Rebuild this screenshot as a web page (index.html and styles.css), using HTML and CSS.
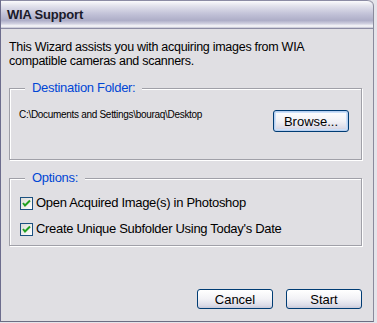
FILE: index.html
```html
<!DOCTYPE html>
<html lang="en">
<head>
  <meta charset="UTF-8">
  <title>WIA Support</title>
  <link rel="stylesheet" href="styles.css">
</head>
<body>

  <div class="window">
    <div class="titlebar">WIA Support</div>

    <div class="content">
      <p class="intro">This Wizard assists you with acquiring images from WIA<br>compatible cameras and scanners.</p>

      <fieldset class="group dest">
        <legend>Destination Folder:</legend>
        <div class="row">
          <span class="path">C:\Documents and Settings\bouraq\Desktop</span>
          <button class="btn default">Browse...</button>
        </div>
      </fieldset>

      <fieldset class="group options">
        <legend>Options:</legend>
        <label class="check">
          <span class="box">
            <svg width="11" height="11" viewBox="0 0 11 11"><path d="M2 5 L4 7.5 L9 2.5" fill="none" stroke="#21a121" stroke-width="2"/></svg>
          </span>
          Open Acquired Image(s) in Photoshop
        </label>
        <label class="check">
          <span class="box">
            <svg width="11" height="11" viewBox="0 0 11 11"><path d="M2 5 L4 7.5 L9 2.5" fill="none" stroke="#21a121" stroke-width="2"/></svg>
          </span>
          Create Unique Subfolder Using Today's Date
        </label>
      </fieldset>

      <div class="footer">
        <button class="btn">Cancel</button>
        <button class="btn">Start</button>
      </div>
    </div>
  </div>

</body>
</html>
```

FILE: styles.css
```css
body {
  margin: 0;
  padding: 0;
  background-color: #e4e4ea;
  font-family: 'Liberation Sans', Arial, sans-serif;
  font-size: 13px;
  color: #000;
}

.window {
  width: 372px;
  height: 321px;
  display: flex;
  flex-direction: column;
  background-color: #e0dfe3;
  border-left: 1px solid #6d6d8d;
  border-right: 1px solid #8a8a9c;
  border-bottom: 1px solid #6d6d82;
  border-top-right-radius: 6px;
}

.titlebar {
  height: 27px;
  line-height: 28px;
  padding-left: 6px;
  font-weight: bold;
  font-size: 13px;
  letter-spacing: -0.2px;
  color: #1a1a2a;
  border-top: 1px solid #8c8ca4;
  border-bottom: 1px solid #8c8ca4;
  border-top-right-radius: 6px;
  background: linear-gradient(#fbfbfd 0%, #e2e2ec 18%, #c2c2d8 48%, #aeaec8 72%, #d0d0e0 84%, #fafafc 93%, #c0c0d0 100%);
}

.content {
  flex: 1;
  display: flex;
  flex-direction: column;
  padding: 11px 11px 12px 8px;
}

.intro {
  margin: 0 0 13px 0;
  font-size: 12.5px;
  line-height: 14px;
  letter-spacing: -0.28px;
}

.group {
  margin: 0;
  border: 1px solid #a0a0a8;
  box-shadow: inset 1px 1px 0 #fff, 1px 1px 0 #fff;
}

.group legend {
  margin-left: 6px;
  padding: 0 7px;
  line-height: 14px;
  letter-spacing: -0.3px;
  color: #0046d5;
  background-color: #e0dfe3;
}

.dest {
  padding: 13px 12px 27px 9px;
}

.row {
  display: flex;
  justify-content: space-between;
  align-items: flex-start;
}

.path {
  font-size: 10px;
  line-height: 14px;
  letter-spacing: -0.3px;
}

.row .btn {
  margin-top: 2px;
  width: 76px;
  height: 22px;
}

.options {
  margin-top: 11px;
  padding: 10px 10px 8px 10px;
  display: flex;
  flex-direction: column;
  gap: 10px;
}

.options legend {
  margin-left: 5px;
}

.check {
  display: flex;
  align-items: center;
  gap: 3px;
  line-height: 16px;
  letter-spacing: -0.3px;
}

.box {
  width: 11px;
  height: 11px;
  border: 1px solid #1c5180;
  background: linear-gradient(135deg, #dcdcd7, #ffffff);
  display: flex;
}

.footer {
  margin-top: auto;
  display: flex;
  justify-content: flex-end;
  gap: 13px;
}

.btn {
  width: 76px;
  height: 20px;
  padding: 0;
  font-family: 'Liberation Sans', Arial, sans-serif;
  font-size: 13px;
  color: #000;
  border: 1px solid #003c74;
  border-radius: 3px;
  background: linear-gradient(#ffffff 0%, #f2f2f6 50%, #dcdce8 85%, #c8c8d8 100%);
}

.btn.default {
  box-shadow: inset 0 0 0 1px #b8d0f0, inset 0 0 0 2px #cde0f8;
}
```
